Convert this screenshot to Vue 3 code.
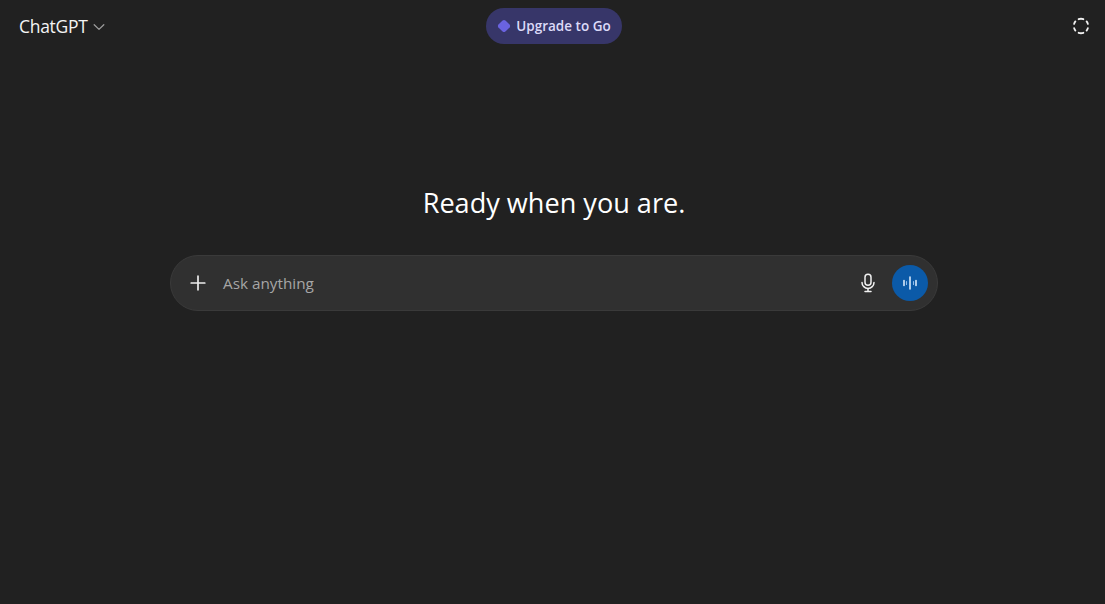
<script setup>
const title = 'Ready when you are.'
</script>

<template>
  <div class="page">
    <header class="top">
      <div class="side left">
        <span class="brand">ChatGPT</span>
        <svg class="chev" width="14" height="14" viewBox="0 0 14 14" fill="none">
          <path d="M2.2 4.8 L7 9.4 L11.8 4.8" stroke="#9c9c9c" stroke-width="1.3" stroke-linecap="round" stroke-linejoin="round"/>
        </svg>
      </div>
      <button class="upgrade">
        <svg width="14" height="14" viewBox="0 0 14 14">
          <path d="M5.6 1.4 Q7 0.4 8.4 1.4 L12.6 5.6 Q13.6 7 12.6 8.4 L8.4 12.6 Q7 13.6 5.6 12.6 L1.4 8.4 Q0.4 7 1.4 5.6 Z" fill="#6a63e0"/>
        </svg>
        <span>Upgrade to Go</span>
      </button>
      <div class="side right">
        <svg width="18" height="18" viewBox="0 0 18 18" fill="none" stroke="#f2f2f2" stroke-width="1.8" stroke-linecap="round">
          <path d="M6.6 2.2 A7.2 7.2 0 0 1 11.4 2.2"/>
          <path d="M14.6 4.4 A7.2 7.2 0 0 1 15.9 6.9"/>
          <path d="M15.9 11.1 A7.2 7.2 0 0 1 14.6 13.6"/>
          <path d="M11.4 15.8 A7.2 7.2 0 0 1 6.6 15.8"/>
          <path d="M3.4 13.6 A7.2 7.2 0 0 1 2.1 11.1"/>
          <path d="M2.1 6.9 A7.2 7.2 0 0 1 3.4 4.4"/>
        </svg>
      </div>
    </header>

    <main class="center">
      <h1 class="title">{{ title }}</h1>
      <div class="composer">
        <svg class="plus" width="16" height="16" viewBox="0 0 16 16" fill="none">
          <path d="M8 1.2 V14.8 M1.2 8 H14.8" stroke="#ececec" stroke-width="1.7" stroke-linecap="round"/>
        </svg>
        <span class="placeholder">Ask anything</span>
        <svg class="mic" width="16" height="20" viewBox="0 0 16 20" fill="none" stroke="#f0f0f0" stroke-width="1.5" stroke-linecap="round">
          <rect x="5" y="1.2" width="6" height="11" rx="3"/>
          <path d="M2 9.4 A6 6 0 0 0 14 9.4"/>
          <path d="M8 15.4 V18.2 M5 18.4 H11"/>
        </svg>
        <div class="voice">
          <svg width="16" height="16" viewBox="0 0 16 16" fill="none" stroke-linecap="round">
            <path d="M4.5 6.5 V9.5 M11.5 6.5 V9.5" stroke="#8fbdec" stroke-width="1.1"/>
            <path d="M2 5.5 V10.5 M14 5.5 V10.5 M8 2 V14" stroke="#d8e8f9" stroke-width="1.6"/>
          </svg>
        </div>
      </div>
    </main>
  </div>
</template>

<style>
html, body { margin: 0; background: #212121; }
</style>

<style scoped>
.page {
  width: 1105px;
  height: 604px;
  background: #212121;
  color: #fff;
  font-family: "Open Sans", "Noto Sans", sans-serif;
  display: flex;
  flex-direction: column;
  box-sizing: border-box;
  overflow: hidden;
}
.top {
  height: 52px;
  padding: 8px 15px 8px 18px;
  box-sizing: border-box;
  display: grid;
  grid-template-columns: 1fr auto 1fr;
  align-items: center;
}
.side { display: flex; align-items: center; }
.left { gap: 4px; padding-left: 1px; }
.right { justify-content: flex-end; }
.brand { font-size: 17.5px; color: #f4f4f4; letter-spacing: -0.3px; }
.chev { margin-top: 2px; }
.upgrade {
  width: 136px;
  height: 36px;
  border: 0;
  border-radius: 18px;
  background: #373669;
  color: #dcdaf8;
  font-family: inherit;
  font-size: 13.5px;
  font-weight: 600;
  padding: 0;
  display: flex;
  align-items: center;
  justify-content: center;
  gap: 5px;
}
.center {
  display: flex;
  flex-direction: column;
  align-items: center;
  padding-top: 130px;
  padding-left: 3px;
}
.title {
  margin: 0 0 31px;
  height: 42px;
  line-height: 42px;
  font-size: 27.1px;
  font-weight: 400;
  color: #fff;
}
.composer {
  width: 768px;
  height: 56px;
  box-sizing: border-box;
  border-radius: 28px;
  background: #303030;
  border: 1px solid #3a3a3a;
  display: flex;
  align-items: center;
  padding: 0 9px 0 19px;
}
.plus { flex: none; }
.placeholder {
  margin-left: 17px;
  flex: 1;
  font-size: 15.3px;
  color: #a6a6a6;
}
.mic { flex: none; margin-right: 16px; }
.voice {
  width: 36px;
  height: 36px;
  border-radius: 50%;
  background: #0b5aa8;
  display: flex;
  align-items: center;
  justify-content: center;
}
</style>
